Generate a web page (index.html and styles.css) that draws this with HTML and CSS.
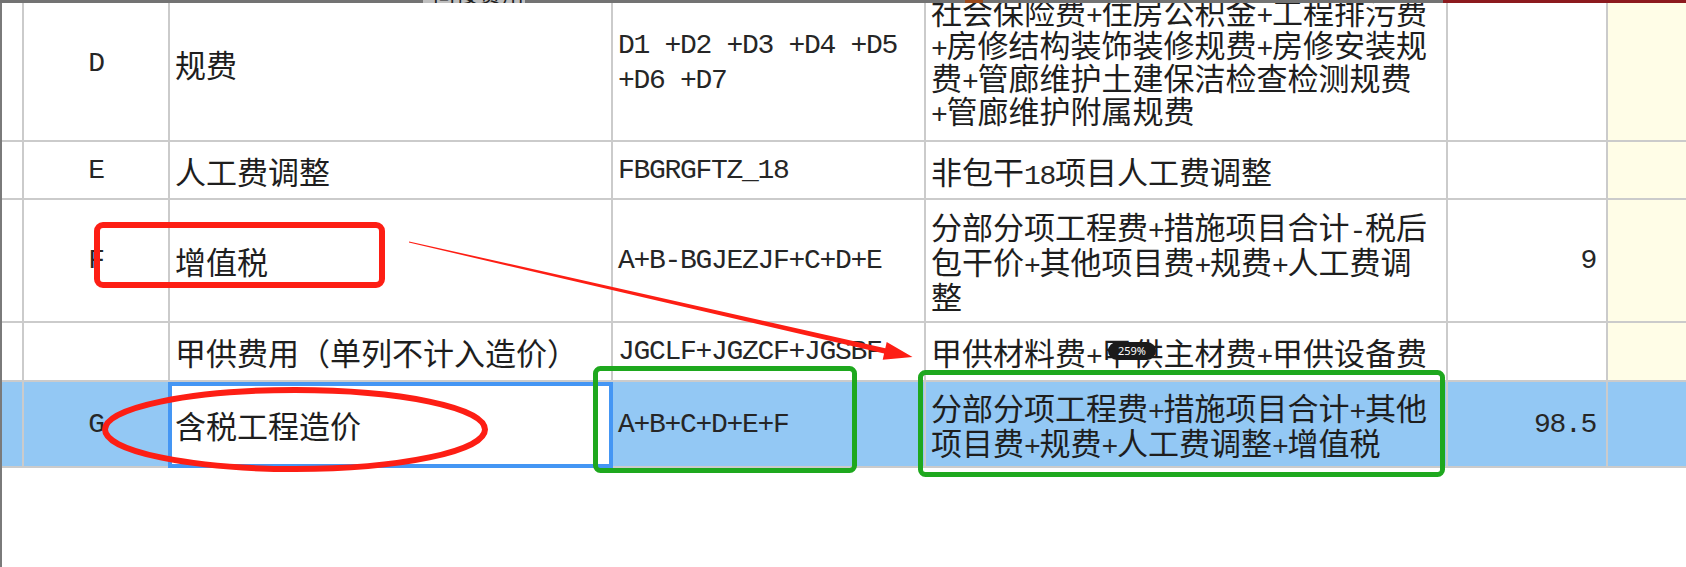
FILE: index.html
```html
<!DOCTYPE html>
<html lang="zh-CN">
<head>
<meta charset="utf-8">
<title>费用汇总</title>
<link rel="stylesheet" href="styles.css">
</head>
<body>
<div class="screen">
  <div class="topbar">
    <div class="tb-gray tb-a"></div>
    <div class="tb-tab"><span>间接费用</span></div>
    <div class="tb-gray tb-b"></div>
    <div class="tb-brown"></div>
    <div class="tb-gray tb-c"></div>
    <div class="tb-red"></div>
  </div>
  <div class="viewport">
    <div class="sheet">
      <div class="row r-d">
        <div class="c"></div>
        <div class="c code"><div class="t lat">D</div></div>
        <div class="c txt"><div class="t">规费</div></div>
        <div class="c txt"><div class="t lat">D1 +D2 +D3 +D4 +D5<br>+D6 +D7</div></div>
        <div class="c txt tight"><div class="t">社会保险费<span class="p">+</span>住房公积金<span class="p">+</span>工程排污费<br><span class="p">+</span>房修结构装饰装修规费<span class="p">+</span>房修安装规<br>费<span class="p">+</span>管廊维护土建保洁检查检测规费<br><span class="p">+</span>管廊维护附属规费</div></div>
        <div class="c num"></div>
        <div class="c extra"></div>
      </div>
      <div class="row r-e">
        <div class="c"></div>
        <div class="c code"><div class="t lat">E</div></div>
        <div class="c txt"><div class="t">人工费调整</div></div>
        <div class="c txt"><div class="t lat">FBGRGFTZ_18</div></div>
        <div class="c txt"><div class="t">非包干<span class="p">18</span>项目人工费调整</div></div>
        <div class="c num"></div>
        <div class="c extra"></div>
      </div>
      <div class="row r-f">
        <div class="c"></div>
        <div class="c code"><div class="t lat">F</div></div>
        <div class="c txt"><div class="t">增值税</div></div>
        <div class="c txt"><div class="t lat">A+B-BGJEZJF+C+D+E</div></div>
        <div class="c txt"><div class="t">分部分项工程费<span class="p">+</span>措施项目合计<span class="p">-</span>税后<br>包干价<span class="p">+</span>其他项目费<span class="p">+</span>规费<span class="p">+</span>人工费调<br>整</div></div>
        <div class="c num"><div class="t lat">9</div></div>
        <div class="c extra"></div>
      </div>
      <div class="row r-j">
        <div class="c"></div>
        <div class="c code"></div>
        <div class="c txt"><div class="t">甲供费用（单列不计入造价）</div></div>
        <div class="c txt"><div class="t lat">JGCLF+JGZCF+JGSBF</div></div>
        <div class="c txt"><div class="t">甲供材料费<span class="p">+</span>甲供主材费<span class="p">+</span>甲供设备费</div></div>
        <div class="c num"></div>
        <div class="c extra"></div>
      </div>
      <div class="row r-g sel">
        <div class="c"></div>
        <div class="c code"><div class="t lat">G</div></div>
        <div class="c txt edit"><div class="t">含税工程造价</div></div>
        <div class="c txt"><div class="t lat">A+B+C+D+E+F</div></div>
        <div class="c txt"><div class="t">分部分项工程费<span class="p">+</span>措施项目合计<span class="p">+</span>其他<br>项目费<span class="p">+</span>规费<span class="p">+</span>人工费调整<span class="p">+</span>增值税</div></div>
        <div class="c num"><div class="t lat">98.5</div></div>
        <div class="c extra"></div>
      </div>
    </div>
  </div>

  <svg class="annot" width="1686" height="567" viewBox="0 0 1686 567">
    <rect x="97" y="225" width="285" height="60" rx="6" ry="6" fill="none" stroke="#fd1e14" stroke-width="6"/>
    <ellipse cx="295" cy="429.5" rx="190" ry="39.5" fill="none" stroke="#fd1e14" stroke-width="6"/>
    <rect x="595.5" y="368.5" width="259" height="102" rx="5" ry="5" fill="none" stroke="#1ea81e" stroke-width="5"/>
    <rect x="920.5" y="372.5" width="522" height="102" rx="5" ry="5" fill="none" stroke="#1ea81e" stroke-width="5"/>
    <polygon points="409.1,241.4 885.3,348.2 886.7,342 912.5,357 882.7,359.8 884.1,353.4 408.9,242.6" fill="#fd1e14"/>
  </svg>
  <div class="zoom-badge">259%</div>
</div>
</body>
</html>
```

FILE: styles.css
```css
html, body {
  margin: 0;
  padding: 0;
  background: #ffffff;
}

.screen {
  position: relative;
  width: 1686px;
  height: 567px;
  overflow: hidden;
  background: #ffffff;
  font-family: "Noto Sans CJK SC", "Liberation Sans", sans-serif;
  color: #1e1e1e;
}

/* top window edge */
.topbar {
  display: flex;
  height: 3px;
}
.tb-gray { background: #737373; }
.tb-a { width: 423px; }
.tb-tab {
  width: 102px;
  background: #bfbfbf;
  overflow: hidden;
}
.tb-tab span {
  display: block;
  font-size: 22px;
  line-height: 22px;
  margin-top: -19px;
  padding-left: 10px;
  color: #202020;
  letter-spacing: 1px;
}
.tb-b { width: 440px; }
.tb-brown { width: 18px; background: #9b4a1c; }
.tb-c { flex: 1; }
.tb-red { width: 243px; background: #8c1a1e; }

.viewport {
  height: 564px;
  overflow: hidden;
  border-left: 2px solid #7a7a7a;
  box-sizing: border-box;
}

.sheet {
  margin-top: -17px;
  font-size: 31px;
  line-height: 35px;
}

.row {
  display: grid;
  grid-template-columns: 22px 146px 443px 313px 522px 160px 1fr;
  overflow: hidden;
}
.r-d { height: 156px; }
.r-e { height: 58px; }
.r-f { height: 123px; }
.r-j { height: 59px; }
.r-g { height: 86px; overflow: visible; }

.c {
  box-sizing: border-box;
  border-right: 2px solid #cbcbcb;
  border-bottom: 2px solid #cbcbcb;
  display: flex;
  align-items: center;
  min-width: 0;
  min-height: 0;
}
.t {
  white-space: nowrap;
}
.c.code { justify-content: center; }
.c.txt { padding-left: 5px; }
.c.tight {
  line-height: 33px;
  padding-bottom: 7px;
}
.c.num { justify-content: flex-end; padding-right: 10px; }
.c.extra {
  background: #fffde7;
  border-right: none;
}

.lat {
  font-family: "Liberation Mono", monospace;
  font-size: 28px;
  letter-spacing: -1.3px;
  color: #262626;
}

/* half-width characters inside Chinese text */
.p {
  font-family: "Liberation Mono", monospace;
  font-size: 28px;
  letter-spacing: -1.3px;
  line-height: 0;
  color: #262626;
}

.row.sel .c { background: #93c8f4; }
.row.sel .c.edit {
  background: #ffffff;
  position: relative;
}
.row.sel .c.edit::after {
  content: "";
  position: absolute;
  left: -2px;
  top: 0;
  right: -2px;
  bottom: -2px;
  border: 4px solid #4496f4;
}

.annot {
  position: absolute;
  left: 0;
  top: 0;
  pointer-events: none;
}

.zoom-badge {
  position: absolute;
  left: 1108px;
  top: 342px;
  width: 48px;
  height: 18px;
  border-radius: 9px;
  background: #1b1b1b;
  color: #ffffff;
  font-family: "Noto Sans", "Liberation Sans", sans-serif;
  font-size: 11px;
  line-height: 18px;
  text-align: center;
}
```
